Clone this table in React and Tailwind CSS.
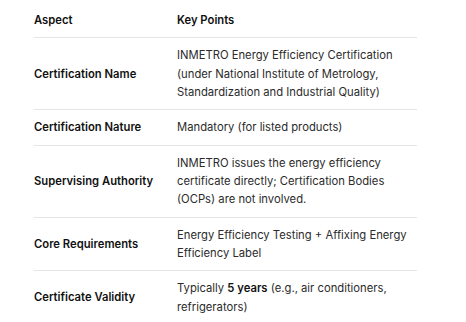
const rows = [
  {
    aspect: 'Certification Name',
    points: <>INMETRO Energy Efficiency Certification (under National Institute of Metrology, Standardization and Industrial Quality)</>,
  },
  { aspect: 'Certification Nature', points: <>Mandatory (for listed products)</> },
  {
    aspect: 'Supervising Authority',
    points: <>INMETRO issues the energy efficiency certificate directly; Certification Bodies (OCPs) are not involved.</>,
  },
  { aspect: 'Core Requirements', points: <>Energy Efficiency Testing + Affixing Energy Efficiency Label</> },
  {
    aspect: 'Certificate Validity',
    points: <>Typically <strong className="font-semibold text-[#111]">5 years</strong> (e.g., air conditioners, refrigerators)</>,
  },
];

export default function App() {
  return (
    <div className="w-[466px] h-[322px] overflow-hidden bg-white font-['Inter',sans-serif] text-[11.25px] leading-[18.33px]">
      <table className="ml-[34px] w-[383px] border-collapse text-left">
        <thead>
          <tr className="border-b border-[#e5e5e5]">
            <th className="w-[143px] pt-[11px] pb-[8px] font-semibold text-[#111]">Aspect</th>
            <th className="pt-[11px] pb-[8px] font-semibold text-[#111]">Key Points</th>
          </tr>
        </thead>
        <tbody>
          {rows.map((r) => (
            <tr key={r.aspect} className="border-b border-[#e5e5e5]">
              <td className="py-2 pr-3 align-middle font-semibold text-[#111]">{r.aspect}</td>
              <td className="py-2 pr-2 align-middle text-[#2b2b2b]">{r.points}</td>
            </tr>
          ))}
        </tbody>
      </table>
    </div>
  );
}
